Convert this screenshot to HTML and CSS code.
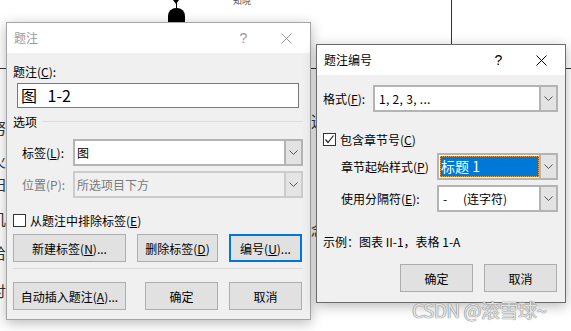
FILE: index.html
```html
<!DOCTYPE html>
<html lang="zh-CN">
<head>
    <meta charset="UTF-8">
    <title>题注</title>
    <link rel="stylesheet" href="styles.css">
</head>
<body>

<!-- 背景里的文档画布 -->
<div class="doc">
    <div class="flow-line"></div>
    <div class="flow-tip"></div>
    <div class="flow-node"></div>
    <div class="flow-label">知晓</div>
    <div class="doc-hline"></div>
    <div class="doc-vline"></div>
    <span class="doc-char c1">努</span>
    <span class="doc-char c2">火</span>
    <span class="doc-char c3">妇</span>
    <span class="doc-char c4">叽</span>
    <span class="doc-char c5">给</span>
    <span class="doc-char c6">讨</span>
    <span class="doc-char c7">选</span>
    <span class="doc-char c8">念</span>
</div>

<!-- 题注 对话框 (非活动) -->
<div class="dialog dlg-caption inactive">
    <div class="titlebar">
        <span class="title">题注</span>
        <span class="cap-btn help">?</span>
        <span class="cap-btn close">
            <svg width="11" height="11" viewBox="0 0 11 11"><path d="M0.5 0.5 L10.5 10.5 M10.5 0.5 L0.5 10.5" stroke="currentColor" stroke-width="1" fill="none"/></svg>
        </span>
    </div>
    <div class="body">
        <div class="text-line">题注(<u>C</u>):</div>
        <div class="caption-input">图 1-2</div>

        <div class="group-head">选项</div>

        <div class="row row-first">
            <span class="row-label">标签(<u>L</u>):</span>
            <div class="combo">
                <span class="combo-text">图</span>
                <span class="combo-arrow"><svg width="9" height="5" viewBox="0 0 9 5"><polyline points="0.5,0.5 4.5,4.5 8.5,0.5" fill="none" stroke="#555" stroke-width="1"/></svg></span>
            </div>
        </div>
        <div class="row row-next">
            <span class="row-label disabled">位置(P):</span>
            <div class="combo combo-disabled">
                <span class="combo-text">所选项目下方</span>
                <span class="combo-arrow"><svg width="9" height="5" viewBox="0 0 9 5"><polyline points="0.5,0.5 4.5,4.5 8.5,0.5" fill="none" stroke="#555" stroke-width="1"/></svg></span>
            </div>
        </div>

        <div class="check-row exclude">
            <span class="checkbox"></span>
            <span class="check-label">从题注中排除标签(<u>E</u>)</span>
        </div>

        <div class="btn-row label-btns">
            <span class="btn w113">新建标签(<u>N</u>)...</span>
            <span class="btn w81">删除标签(<u>D</u>)</span>
            <span class="btn w73 focused">编号(<u>U</u>)...</span>
        </div>
        <div class="separator"></div>
        <div class="btn-row bottom-btns">
            <span class="btn w113">自动插入题注(<u>A</u>)...</span>
            <span class="btn w73 push">确定</span>
            <span class="btn w73">取消</span>
        </div>
    </div>
</div>

<!-- 题注编号 对话框 (活动) -->
<div class="dialog dlg-number">
    <div class="titlebar">
        <span class="title">题注编号</span>
        <span class="cap-btn help">?</span>
        <span class="cap-btn close">
            <svg width="11" height="11" viewBox="0 0 11 11"><path d="M0.5 0.5 L10.5 10.5 M10.5 0.5 L0.5 10.5" stroke="currentColor" stroke-width="1" fill="none"/></svg>
        </span>
    </div>
    <div class="body">
        <div class="row format-row">
            <span class="row-label">格式(<u>F</u>):</span>
            <div class="combo">
                <span class="combo-text">1, 2, 3, ...</span>
                <span class="combo-arrow"><svg width="9" height="5" viewBox="0 0 9 5"><polyline points="0.5,0.5 4.5,4.5 8.5,0.5" fill="none" stroke="#555" stroke-width="1"/></svg></span>
            </div>
        </div>

        <div class="check-row chapter">
            <span class="checkbox checked">
                <svg width="11" height="11" viewBox="0 0 11 11"><polyline points="1.5,5.5 4,8.5 9.5,1.5" fill="none" stroke="#222" stroke-width="1.2"/></svg>
            </span>
            <span class="check-label">包含章节号(<u>C</u>)</span>
        </div>

        <div class="row row-style">
            <span class="row-label">章节起始样式(<u>P</u>)</span>
            <div class="combo">
                <span class="combo-text"><span class="selected">标题 1</span></span>
                <span class="combo-arrow"><svg width="9" height="5" viewBox="0 0 9 5"><polyline points="0.5,0.5 4.5,4.5 8.5,0.5" fill="none" stroke="#555" stroke-width="1"/></svg></span>
            </div>
        </div>
        <div class="row row-next row-sep">
            <span class="row-label">使用分隔符(<u>E</u>):</span>
            <div class="combo">
                <span class="combo-text"><span class="dash">-</span>(连字符)</span>
                <span class="combo-arrow"><svg width="9" height="5" viewBox="0 0 9 5"><polyline points="0.5,0.5 4.5,4.5 8.5,0.5" fill="none" stroke="#555" stroke-width="1"/></svg></span>
            </div>
        </div>

        <div class="text-line sample">示例：图表 II-1，表格 1-A</div>

        <div class="btn-row number-btns">
            <span class="btn w73">确定</span>
            <span class="btn w73">取消</span>
        </div>
    </div>
</div>

<div class="watermark">CSDN @滚雪球~</div>

</body>
</html>
```

FILE: styles.css
```css
* {
    box-sizing: border-box;
}
body {
    margin: 0;
    width: 571px;
    height: 331px;
    overflow: hidden;
    position: relative;
    background: #fff;
    font-family: "Noto Sans CJK SC", sans-serif;
    font-size: 12px;
    color: #000;
}
u {
    text-decoration: underline;
    text-underline-offset: 1px;
}

/* 背景文档 */
.doc {
    position: absolute;
    inset: 0;
}
.flow-line {
    position: absolute;
    left: 176px;
    top: 0;
    width: 1px;
    height: 9px;
    background: #000;
}
.flow-tip {
    position: absolute;
    left: 173px;
    top: 0;
    border-left: 3px solid transparent;
    border-right: 3px solid transparent;
    border-top: 4px solid #000;
}
.flow-node {
    position: absolute;
    left: 168px;
    top: 8px;
    width: 17px;
    height: 16px;
    background: #000;
    border-radius: 8px 8px 0 0;
}
.flow-label {
    position: absolute;
    left: 233px;
    top: -5px;
    font-size: 9px;
    line-height: 11px;
    color: #555;
}
.doc-hline {
    position: absolute;
    left: 0;
    right: 0;
    top: 68px;
    height: 1px;
    background: #333;
}
.doc-vline {
    position: absolute;
    left: 451px;
    top: 0;
    width: 1px;
    height: 50px;
    background: #333;
}
.doc-char {
    position: absolute;
    font-size: 15px;
    line-height: 15px;
    color: #333;
}
.c1 { left: -9px; top: 120px; }
.c2 { left: -9px; top: 153px; }
.c3 { left: -9px; top: 176px; }
.c4 { left: -9px; top: 211px; }
.c5 { left: -9px; top: 245px; }
.c6 { left: -9px; top: 283px; }
.c7 { left: 311px; top: 113px; }
.c8 { left: 311px; top: 222px; }

/* 对话框 */
.dialog {
    position: absolute;
    background: #f0f0f0;
    border: 1px solid #a5a5a5;
    box-shadow: 0 3px 12px rgba(0, 0, 0, 0.28);
}
.dlg-caption {
    left: 6px;
    top: 22px;
    width: 305px;
    height: 298px;
}
.dlg-number {
    left: 316px;
    top: 44px;
    width: 250px;
    height: 259px;
    border-color: #6b6b6b;
}
.titlebar {
    height: 30px;
    background: #fff;
    display: flex;
    align-items: center;
    padding-right: 2px;
}
.title {
    flex: 1;
    padding-left: 7px;
    line-height: 16px;
}
.cap-btn {
    width: 43px;
    height: 30px;
    display: flex;
    align-items: center;
    justify-content: center;
}
.help {
    font-family: "Liberation Sans", sans-serif;
    font-size: 14px;
}
.inactive .titlebar {
    color: #9a9a9a;
}
.dlg-number .titlebar {
    color: #000;
}

.dlg-caption .body {
    padding: 11px 7px 0 6px;
}
.dlg-number .body {
    padding: 0 7px 0 6px;
}
.text-line {
    line-height: 16px;
}
.caption-input {
    margin: 3px 4px 0 4px;
    height: 25px;
    border: 1px solid #7a7a7a;
    background: #fff;
    font-size: 16px;
    line-height: 23px;
    padding-left: 3px;
    word-spacing: 7px;
}
.group-head {
    display: flex;
    align-items: center;
    margin-top: 6px;
    line-height: 16px;
}
.group-head::after {
    content: "";
    flex: 1;
    height: 1px;
    margin-left: 5px;
    margin-top: -1px;
    background: #dcdcdc;
}

/* 行 + 下拉框 */
.row {
    display: flex;
    align-items: center;
}
.row-label {
    line-height: 16px;
    white-space: nowrap;
}
.dlg-caption .row-label {
    width: 60px;
    padding-left: 9px;
}
.row-first {
    margin-top: 9px;
}
.row-next {
    margin-top: 5px;
}
.disabled {
    color: #7a7a7a;
}
.combo {
    flex: 1;
    height: 27px;
    display: flex;
    border: 2px solid #b4b4b4;
    background: #fff;
}
.combo-text {
    flex: 1;
    display: flex;
    align-items: center;
    padding-left: 2px;
    white-space: nowrap;
}
.combo-arrow {
    width: 17px;
    border-left: 2px solid #b4b4b4;
    background: #e3e3e3;
    display: flex;
    align-items: center;
    justify-content: center;
}
.combo-disabled {
    background: #f0f0f0;
    border-color: #cccccc;
    color: #7a7a7a;
}
.combo-disabled .combo-arrow {
    border-left-color: #cccccc;
    background: #e5e5e5;
}

/* 复选框 */
.check-row {
    display: flex;
    align-items: center;
    height: 13px;
}
.exclude {
    margin-top: 16px;
}
.checkbox {
    width: 13px;
    height: 13px;
    border: 1px solid #333;
    background: #fff;
    display: flex;
    align-items: center;
    justify-content: center;
}
.check-label {
    margin-left: 4px;
    line-height: 16px;
}

/* 按钮 */
.btn-row {
    display: flex;
    gap: 11px;
}
.label-btns {
    margin-top: 7px;
}
.bottom-btns {
    margin-top: 13px;
}
.bottom-btns .push {
    margin-left: 8px;
}
.btn {
    height: 28px;
    border: 1px solid #adadad;
    background: #e1e1e1;
    display: flex;
    align-items: center;
    justify-content: center;
    white-space: nowrap;
}
.btn.focused {
    border: 2px solid #0078d7;
}
.w113 { width: 113px; }
.w81 { width: 81px; }
.w73 { width: 73px; }
.separator {
    margin-top: 6px;
    height: 1px;
    background: #d9d9d9;
}

/* 题注编号 */
.dlg-number .row-label {
    width: 50px;
}
.format-row {
    margin-top: 10px;
}
.format-row .combo-text {
    padding-left: 4px;
    letter-spacing: 0.3px;
}
.chapter {
    margin-top: 21px;
}
.row-style {
    margin-top: 7px;
}
.row-style .row-label,
.row-sep .row-label {
    width: 114px;
    padding-left: 18px;
}
.row-style .combo-text {
    padding: 1px 0 1px 1px;
    align-items: stretch;
}
.selected {
    flex: 1;
    background: #0078d7;
    color: #fff;
    font-size: 14px;
    line-height: 21px;
    padding-left: 1px;
    outline: 1px dotted #f5a040;
    outline-offset: -1px;
}
.dash {
    width: 22px;
    padding-left: 2px;
}
.sample {
    margin-top: 22px;
}
.number-btns {
    margin-top: 14px;
    margin-right: 1px;
    justify-content: flex-end;
}

.watermark {
    position: absolute;
    left: 412px;
    top: 297px;
    font-size: 19px;
    line-height: 26px;
    color: #e2e2e2;
    letter-spacing: -0.5px;
    text-shadow: 0 0 1px #777, 0 0 1px #777;
}
```
